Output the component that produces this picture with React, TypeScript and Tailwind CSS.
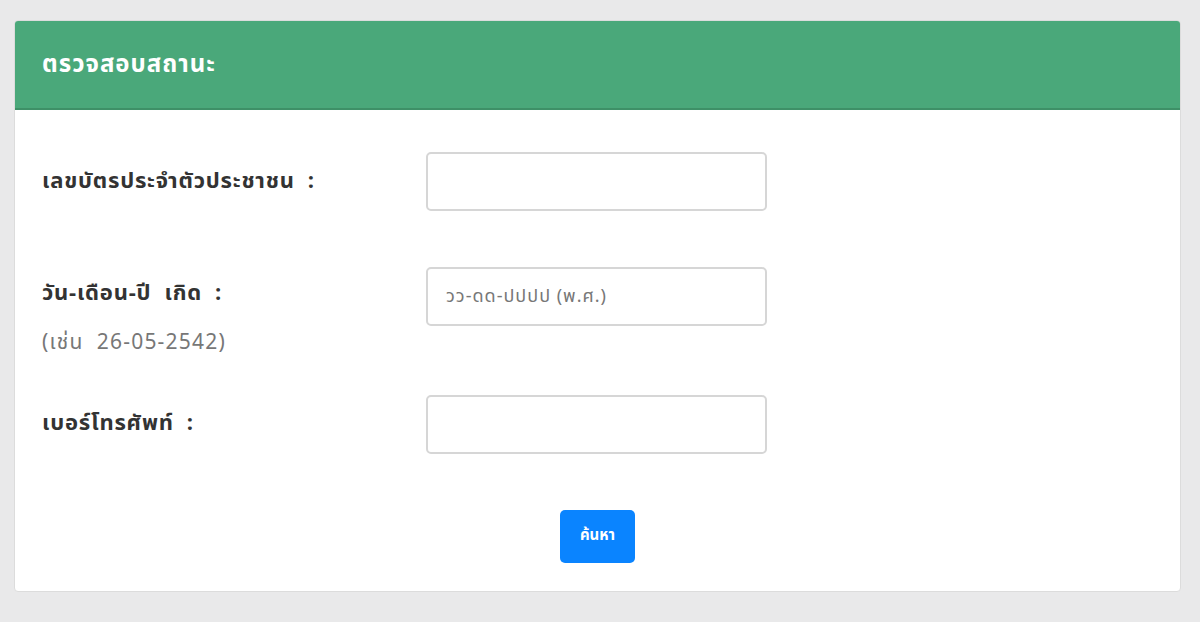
import React from 'react';

const font = { fontFamily: '"Noto Sans Thai", "Noto Sans", "DejaVu Sans", sans-serif' };

const StatusCheck: React.FC = () => {
  return (
    <div className="min-h-screen bg-[#e9e9ea] px-[14px] pt-[20px]" style={font}>
      <div className="bg-white rounded-[4px] border border-[#dcdcdc] overflow-hidden w-[1167px] h-[572px]">
        <div className="bg-[#4aa87a] border-b-2 border-[#3e9067] h-[89px] flex items-center px-[27px]">
          <h1 className="text-white text-[24px] font-bold tracking-[1px]">ตรวจสอบสถานะ</h1>
        </div>

        <div className="pl-[27px] pt-[42px]">
          <div className="flex items-start h-[59px]">
            <div className="w-[384px] pt-[13px]">
              <label className="text-[22px] font-bold text-[#333] tracking-[0.8px]">เลขบัตรประจำตัวประชาชน&nbsp;&nbsp;:</label>
            </div>
            <input className="w-[341px] h-[59px] border-2 border-[#d6d6d6] rounded-[5px] px-[18px] text-[16px] outline-none" />
          </div>

          <div className="flex items-start h-[59px] mt-[56px]">
            <div className="w-[384px] pt-[10px]">
              <div className="text-[22px] font-bold text-[#333] tracking-[0.8px]">วัน-เดือน-ปี&nbsp;&nbsp;เกิด&nbsp;&nbsp;:</div>
              <div className="text-[21px] text-[#777] mt-[17px] tracking-[1.2px]">(เช่น&nbsp;&nbsp;26-05-2542)</div>
            </div>
            <input
              placeholder="วว-ดด-ปปปป (พ.ศ.)"
              className="w-[341px] h-[59px] border-2 border-[#d6d6d6] rounded-[5px] px-[18px] text-[18px] tracking-[1px] outline-none placeholder:text-[#777]"
            />
          </div>

          <div className="flex items-start h-[59px] mt-[69px]">
            <div className="w-[384px] pt-[12px]">
              <label className="text-[22px] font-bold text-[#333] tracking-[0.8px]">เบอร์โทรศัพท์&nbsp;&nbsp;:</label>
            </div>
            <input className="w-[341px] h-[59px] border-2 border-[#d6d6d6] rounded-[5px] px-[18px] text-[16px] outline-none" />
          </div>

          <div className="flex justify-center pr-[27px] mt-[56px]">
            <button className="w-[75px] h-[53px] bg-[#0a84ff] text-white text-[15px] font-bold rounded-[5px]">ค้นหา</button>
          </div>
        </div>
      </div>
    </div>
  );
};

export default StatusCheck;
